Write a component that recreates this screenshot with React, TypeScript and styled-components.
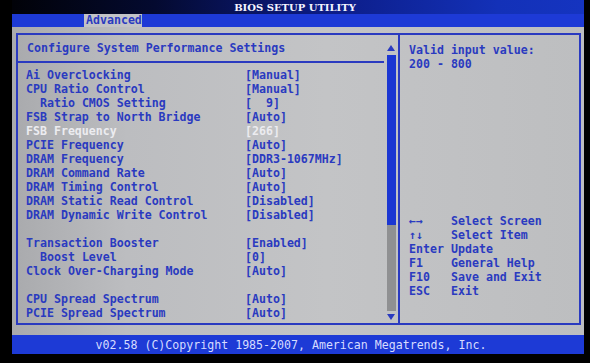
import React from "react";
import styled, { createGlobalStyle } from "styled-components";

const GlobalStyle = createGlobalStyle`
  html, body {
    margin: 0;
    padding: 0;
    background: #000;
  }
  body {
    width: 590px;
    height: 363px;
    overflow: hidden;
    font-family: "DejaVu Sans Mono", "Liberation Mono", monospace;
  }
`;

const BIOS_BLUE = "#2a3ac0";
const BAR_BLUE = "#1d3ad6";

// --- screen frame ---

const Screen = styled.div`
  width: 572px;
  margin-left: 12px;
  display: flex;
  flex-direction: column;
  font-family: "DejaVu Sans Mono", "Liberation Mono", monospace;
  font-weight: bold;
  font-size: 11.6px;
`;

const TitleBar = styled.div`
  height: 14px;
  line-height: 15px;
  text-align: center;
  padding-right: 6px;
  color: #f4f4ff;
  font-family: "DejaVu Serif", "Liberation Serif", serif;
  font-size: 10px;
  background: linear-gradient(
    to right,
    #010208 0%,
    #040a30 25%,
    #0c1c86 55%,
    #1331b8 85%,
    #1534c0 100%
  );
`;

const TabBar = styled.div`
  height: 13px;
  background: ${BAR_BLUE};
  display: flex;
`;

const Tab = styled.div<{ $active?: boolean }>`
  margin-left: 72px;
  width: 56px;
  padding-left: 2px;
  line-height: 13px;
  background: ${(p) => (p.$active ? "#c2c3c6" : "transparent")};
  color: ${(p) => (p.$active ? BIOS_BLUE : "#fff")};
`;

const Main = styled.div`
  height: 308px;
  box-sizing: border-box;
  padding: 6px 3px 10px 4px;
  background: linear-gradient(
    to right,
    #a9aaad 0%,
    #bcbdc0 20%,
    #c3c4c6 55%,
    #bdbec0 100%
  );
  display: flex;
`;

const Frame = styled.div`
  flex: 1;
  border: 2px solid ${BIOS_BLUE};
  display: flex;
  color: ${BIOS_BLUE};
`;

// --- left pane ---

const LeftPane = styled.div`
  width: 380px;
  display: flex;
`;

const LeftContent = styled.div`
  flex: 1;
  display: flex;
  flex-direction: column;
`;

const Header = styled.div`
  height: 26px;
  line-height: 26px;
  padding-left: 9px;
  border-bottom: 2px solid ${BIOS_BLUE};
  white-space: pre;
`;

const List = styled.div`
  padding: 5px 0 0 8px;
  display: flex;
  flex-direction: column;
`;

const Row = styled.div<{ $indent?: boolean; $selected?: boolean }>`
  height: 14px;
  line-height: 14px;
  display: grid;
  grid-template-columns: 219px 1fr;
  white-space: pre;
  color: ${(p) => (p.$selected ? "#ececf0" : "inherit")};

  & > span:first-child {
    padding-left: ${(p) => (p.$indent ? "14px" : "0")};
  }
`;

const Spacer = styled.div`
  height: 14px;
`;

const ScrollColumn = styled.div`
  width: 14px;
  display: flex;
  flex-direction: column;
  align-items: center;
`;

const Arrow = styled.div<{ $down?: boolean }>`
  width: 0;
  height: 0;
  margin-top: ${(p) => (p.$down ? "3px" : "10px")};
  border-left: 4px solid transparent;
  border-right: 4px solid transparent;
  ${(p) =>
    p.$down
      ? `border-top: 6px solid ${BIOS_BLUE};`
      : `border-bottom: 6px solid ${BIOS_BLUE};`}
`;

const Thumb = styled.div`
  margin-top: 4px;
  width: 9px;
  height: 170px;
  background: #1b36d2;
`;

const Track = styled.div`
  width: 9px;
  height: 86px;
  background: #8f9092;
`;

// --- right pane ---

const RightPane = styled.div`
  flex: 1;
  border-left: 2px solid ${BIOS_BLUE};
  padding: 8px 0 25px 9px;
  display: flex;
  flex-direction: column;
`;

const Line = styled.div`
  height: 14px;
  line-height: 14px;
  white-space: pre;
`;

const HelpBox = styled.div`
  margin-top: auto;
`;

const HelpRow = styled.div`
  height: 14px;
  line-height: 14px;
  display: grid;
  grid-template-columns: 42px 1fr;
  white-space: pre;
`;

// --- footer ---

const Footer = styled.div`
  height: 19px;
  line-height: 21px;
  background: ${BAR_BLUE};
  color: #d6dcff;
  font-weight: normal;
  text-align: center;
  padding-right: 14px;
  white-space: pre;
`;

type Item = {
  label: string;
  value: string;
  indent?: boolean;
  selected?: boolean;
} | null;

const items: Item[] = [
  { label: "Ai Overclocking", value: "[Manual]" },
  { label: "CPU Ratio Control", value: "[Manual]" },
  { label: "Ratio CMOS Setting", value: "[  9]", indent: true },
  { label: "FSB Strap to North Bridge", value: "[Auto]" },
  { label: "FSB Frequency", value: "[266]", selected: true },
  { label: "PCIE Frequency", value: "[Auto]" },
  { label: "DRAM Frequency", value: "[DDR3-1067MHz]" },
  { label: "DRAM Command Rate", value: "[Auto]" },
  { label: "DRAM Timing Control", value: "[Auto]" },
  { label: "DRAM Static Read Control", value: "[Disabled]" },
  { label: "DRAM Dynamic Write Control", value: "[Disabled]" },
  null,
  { label: "Transaction Booster", value: "[Enabled]" },
  { label: "Boost Level", value: "[0]", indent: true },
  { label: "Clock Over-Charging Mode", value: "[Auto]" },
  null,
  { label: "CPU Spread Spectrum", value: "[Auto]" },
  { label: "PCIE Spread Spectrum", value: "[Auto]" },
];

const help: [string, string][] = [
  ["\u2190\u2192", "Select Screen"],
  ["\u2191\u2193", "Select Item"],
  ["Enter", "Update"],
  ["F1", "General Help"],
  ["F10", "Save and Exit"],
  ["ESC", "Exit"],
];

export default function App() {
  return (
    <>
      <GlobalStyle />
      <Screen>
        <TitleBar>BIOS SETUP UTILITY</TitleBar>
        <TabBar>
          <Tab $active>Advanced</Tab>
        </TabBar>
        <Main>
          <Frame>
            <LeftPane>
              <LeftContent>
                <Header>Configure System Performance Settings</Header>
                <List>
                  {items.map((it, i) =>
                    it ? (
                      <Row key={i} $indent={it.indent} $selected={it.selected}>
                        <span>{it.label}</span>
                        <span>{it.value}</span>
                      </Row>
                    ) : (
                      <Spacer key={i} />
                    )
                  )}
                </List>
              </LeftContent>
              <ScrollColumn>
                <Arrow />
                <Thumb />
                <Track />
                <Arrow $down />
              </ScrollColumn>
            </LeftPane>
            <RightPane>
              <Line>Valid input value:</Line>
              <Line>200 - 800</Line>
              <HelpBox>
                {help.map(([k, d]) => (
                  <HelpRow key={k}>
                    <span>{k}</span>
                    <span>{d}</span>
                  </HelpRow>
                ))}
              </HelpBox>
            </RightPane>
          </Frame>
        </Main>
        <Footer>v02.58 (C)Copyright 1985-2007, American Megatrends, Inc.</Footer>
      </Screen>
    </>
  );
}
